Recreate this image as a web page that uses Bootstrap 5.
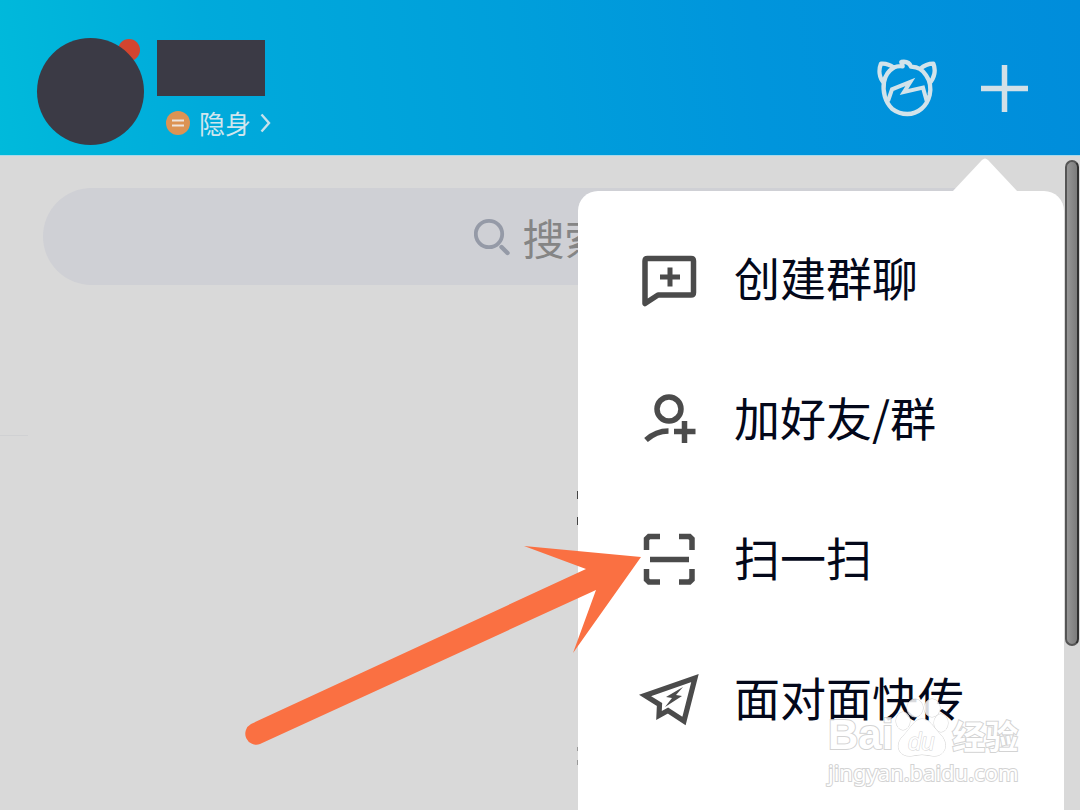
<!DOCTYPE html>
<html lang="zh-CN">
<head>
<meta charset="utf-8">
<meta name="viewport" content="width=device-width, initial-scale=1">
<title>消息</title>
<link href="https://cdn.jsdelivr.net/npm/bootstrap@5.3.0/dist/css/bootstrap.min.css" rel="stylesheet">
<style>
body { font-family: "Noto Sans", "Noto Sans CJK SC", sans-serif; background: #d9d9d9; }
svg { display: block; flex: none; }
.app-header { height: 156px; padding: 38px 52px 0 37px; background: linear-gradient(82deg, #00badb 0%, #00aadb 20%, #009fdb 48%, #0095dc 70%, #008ddb 100%); border-bottom: 1px solid #a9d9ea; }
.avatar { width: 107px; height: 107px; }
.avatar-face { position: relative; width: 107px; height: 107px; background: #3b3a45; }
.avatar-dot { top: 1px; right: 4px; width: 22px; height: 22px; background: #d2452f; }
.user-info { margin: 2px 0 0 13px; }
.user-name { width: 108px; height: 56px; background: #3b3a45; }
.status-btn { gap: 9px; margin: 9px 0 0 9px; font-family: "Noto Sans CJK SC", sans-serif; font-size: 26px; line-height: 36px; color: #d0e6ee; }
.header-tools { gap: 44px; margin-top: 20px; }
.search-pill { height: 97px; margin: 32px 43px 0; gap: 13px; border-radius: 49px; background: #cfd0d5; }
.search-pill input { width: 84px; font-family: "Noto Sans CJK SC", sans-serif; font-size: 42px; line-height: 60px; outline: 0; }
.search-pill input::placeholder { color: #858585; opacity: 1; }
.list-rule { width: 28px; margin: 150px 0 0; border-color: #b9bbc2; }
.quick-menu { top: 35px; right: 16px; bottom: 0; width: 45%; min-width: 440px; padding-top: 19px; background: #fff; border-radius: 20px 20px 0 0; }
.menu-tip { top: -33px; right: 46px; }
.menu-row { height: 140px; padding-left: 61px; gap: 35px; font-family: "Noto Sans CJK SC", sans-serif; font-size: 46px; line-height: 60px; color: #03081a; }
.menu-row span { padding-bottom: 8px; }
.scroll-thumb { top: 4px; right: 1px; width: 14px; height: 486px; border: 2px solid #555; border-right-color: #303030; border-radius: 7px; background: linear-gradient(90deg, #969696, #7c7c7c); }
.pointer-arrow { top: 384px; right: 434px; }
.hint-marks { top: 334px; right: 501px; }
.watermark { right: 58px; bottom: 24px; width: 194px; color: #fff; opacity: .85; -webkit-text-stroke: 2px #ccc; paint-order: stroke; }
.wm-bai { font: bold 42px/44px "Liberation Sans", sans-serif; }
.wm-exp { font: bold 33px/44px "Noto Sans CJK SC", sans-serif; }
.wm-url { font: 22px/28px "Noto Sans", sans-serif; }
.wm-paw { margin: -14px 3px 0 2px; }
</style>
</head>
<body class="overflow-hidden">
<div class="min-vh-100 d-flex flex-column">
  <header class="app-header d-flex align-items-start">
    <div class="avatar position-relative">
      <span class="avatar-dot position-absolute rounded-circle"></span>
      <div class="avatar-face rounded-circle"></div>
    </div>
    <div class="user-info">
      <div class="user-name"></div>
      <button type="button" class="status-btn btn p-0 border-0 d-flex align-items-center">
        <svg width="24" height="24" viewBox="0 0 24 24"><circle cx="12" cy="12" r="12" fill="#dc9353"/><path d="M6 9.5h12M6 14.500h12" stroke="#eee4dc" stroke-width="2"/></svg>
        <span>隐身</span>
        <svg width="11" height="20" viewBox="0 0 11 20"><path d="M1.500 1.500L9 10l-7.500 8.500" fill="none" stroke="#c5e1eb" stroke-width="2.400"/></svg>
      </button>
    </div>
    <div class="header-tools d-flex align-items-center ms-auto">
      <button type="button" class="btn p-0 border-0" aria-label="小世界">
        <svg width="60" height="60" viewBox="51 54 180 180" fill="none" stroke="#d2e3ea" stroke-width="13" stroke-linejoin="round"><path d="M73 130C56 112 56 88 63 71Q84 69 101 83Q113 77 128 79L124 66Q146 62 153 80Q170 81 180 87Q198 71 220 71C228 90 224 114 208 130"/><path d="M101 83Q77 98 72 126C67 156 76 187 96 206Q117 222 142 222C174 222 201 199 209 165C214 140 209 121 199 107Q191 94 180 87"/><path d="M84 183L96 148L151 126L132 156L189 143L200 183" stroke-width="12" stroke-linejoin="miter"/></svg>
      </button>
      <button type="button" class="btn p-0 border-0" aria-label="添加">
        <svg width="47" height="47" viewBox="0 0 47 47"><path d="M23.500 0v47M0 23.500h47" stroke="#d2e0e7" stroke-width="5.500"/></svg>
      </button>
    </div>
  </header>

  <main class="position-relative flex-grow-1">
    <label class="search-pill d-flex align-items-center justify-content-center">
      <svg width="36" height="40" viewBox="0 0 36 40" fill="none" stroke="#959aa7"><circle cx="15" cy="17" r="13.200" stroke-width="3.800"/><path d="M27.500 30l6 6" stroke-width="4.400" stroke-linecap="round"/></svg>
      <input type="search" class="border-0 bg-transparent p-0" placeholder="搜索" aria-label="搜索">
    </label>
    <hr class="list-rule">
    <svg class="hint-marks position-absolute" width="2" height="276" viewBox="0 0 2 276"><path d="M1 1v8M1 27v8" stroke="#444" stroke-width="2"/><path d="M1 257v4M1 270v5" stroke="#999" stroke-width="2"/></svg>

    <nav class="quick-menu position-absolute" aria-label="快捷菜单">
      <svg class="menu-tip position-absolute" width="66" height="34" viewBox="0 0 66 34"><path d="M0 34L30 2Q33-1 36 2L66 34z" fill="#fff"/></svg>
      <a href="#" class="menu-row d-flex align-items-center text-decoration-none">
        <svg width="60" height="60" viewBox="0 0 60 60" fill="none" stroke="#4b4b4b" stroke-width="5.500"><path d="M6 53V11Q6 8.500 8.500 8.500H52Q54.500 8.500 54.500 11V42.500Q54.500 45 52 45H19L6 53.500z" stroke-linejoin="round"/><path d="M31 17.500v19M21 27h20" stroke-width="5"/></svg>
        <span>创建群聊</span>
      </a>
      <a href="#" class="menu-row d-flex align-items-center text-decoration-none">
        <svg width="60" height="60" viewBox="0 0 60 60" fill="none" stroke="#4b4b4b" stroke-width="5.500"><circle cx="30" cy="19" r="12"/><path d="M7 50Q17 41 29.500 41M35 41.500h21.500M45.500 31v22"/></svg>
        <span>加好友/群</span>
      </a>
      <a href="#" class="menu-row d-flex align-items-center text-decoration-none">
        <svg width="60" height="60" viewBox="0 0 60 60" fill="none" stroke="#4b4b4b" stroke-width="5.500"><path d="M7.500 20V9L10 6.500H21M40 6.500H50.500L53 9V20M53 39V49.500L50.500 52H40M21 52H10L7.500 49.500V39M11 29.500H50"/></svg>
        <span>扫一扫</span>
      </a>
      <a href="#" class="menu-row d-flex align-items-center text-decoration-none">
        <svg width="60" height="60" viewBox="0 0 60 60"><path d="M6 25.500L56 8L45 51L29 40.500L20 45.500L20.500 34.500z" fill="none" stroke="#4b4b4b" stroke-width="5.200"/><path d="M44 17L27 27L33 28L26 37L43 26L37 25z" fill="#4b4b4b"/></svg>
        <span>面对面快传</span>
      </a>
    </nav>

    <svg class="pointer-arrow position-absolute" width="402" height="210" viewBox="244 540 402 210"><path d="M524 546L641 557L573 653L596 590L260 744A11 11 0 0 1 251 724L586 569z" fill="#fa7042"/></svg>
    <div class="scroll-thumb position-absolute"></div>
    <div class="watermark position-absolute">
      <div class="d-flex align-items-center">
        <span class="wm-bai">Bai</span>
        <svg class="wm-paw" width="54" height="60" viewBox="895 698 54 60" fill="#fff" stroke="#ccc"><ellipse cx="915" cy="708" rx="8" ry="9"/><ellipse cx="932" cy="708" rx="8" ry="9"/><ellipse cx="903" cy="721" rx="7" ry="9"/><ellipse cx="941" cy="723" rx="7" ry="9"/><path d="M922 719C930 719 933 727 940 734C950 744 945 757 933 756Q922 753 911 756C898 757 894 744 904 735C911 728 914 719 922 719z" stroke-width="1"/><text x="908" y="750" font-family="Liberation Sans, sans-serif" font-size="24" font-style="italic">du</text></svg>
        <span class="wm-exp text-nowrap">经验</span>
      </div>
      <div class="wm-url">jingyan.baidu.com</div>
    </div>
  </main>
</div>
<script src="https://cdn.jsdelivr.net/npm/bootstrap@5.3.0/dist/js/bootstrap.bundle.min.js"></script>
</body>
</html>
